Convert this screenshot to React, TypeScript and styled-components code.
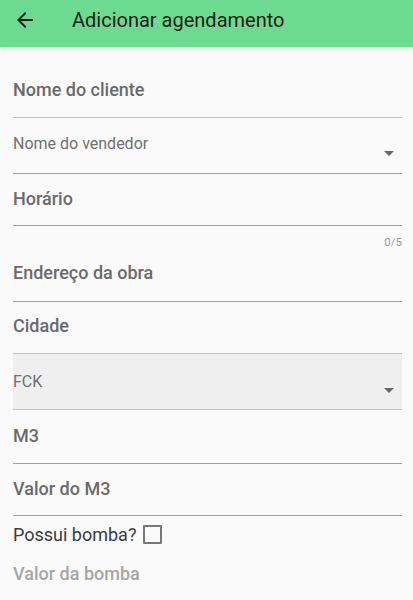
import React from 'react';
import styled, {createGlobalStyle} from 'styled-components';

const GlobalStyle = createGlobalStyle`
  html, body {
    margin: 0;
    padding: 0;
    background: #fafafa;
    font-family: Roboto, "Noto Sans", Arial, sans-serif;
  }
`;

const Screen = styled.div`
  width: 413px;
  height: 600px;
  overflow: hidden;
  background: #fafafa;
`;

const AppBar = styled.header`
  height: 47px;
  display: flex;
  align-items: center;
  padding-left: 13px;
  background: #6ddb8f;
  box-shadow: 0 2px 4px rgba(0, 0, 0, 0.12);
  position: relative;
  z-index: 1;
  box-sizing: border-box;
  padding-bottom: 8px;

  & h1 {
    margin: 0 0 0 35px;
    font-size: 20px;
    font-weight: 400;
    color: #1b1b1b;
  }
`;

const Form = styled.div`
  padding: 0 11px 0 13px;
`;

const Field = styled.div<{top: number; bottom: number; line?: string}>`
  padding-top: ${p => p.top}px;
  padding-bottom: ${p => p.bottom}px;
  border-bottom: 1px solid ${p => p.line || '#a0a0a0'};
  font-size: 18px;
  line-height: 20px;
  font-weight: 500;
  color: #6a6a6a;
`;

const Select = styled.div<{filled?: boolean}>`
  height: 55px;
  display: flex;
  justify-content: space-between;
  border-bottom: 1px solid ${p => (p.filled ? '#c4c4c4' : '#a0a0a0')};
  background: ${p => (p.filled ? '#efefef' : 'transparent')};
  box-sizing: content-box;

  & span {
    padding-top: ${p => (p.filled ? 19 : 17)}px;
    font-size: 16px;
    line-height: 18px;
    color: #707070;
  }
`;

const Caret = styled.i<{drop: number}>`
  align-self: flex-start;
  margin-top: ${p => p.drop}px;
  margin-right: 8px;
  width: 0;
  height: 0;
  border-left: 5px solid transparent;
  border-right: 5px solid transparent;
  border-top: 5px solid #666;
`;

const Helper = styled.div`
  text-align: right;
  font-size: 11.5px;
  line-height: 14px;
  padding-top: 9px;
  height: 14px;
  color: #9a9a9a;
`;

const CheckRow = styled.label`
  display: flex;
  align-items: center;
  gap: 7px;
  padding-top: 8px;
  height: 20px;
  font-size: 18px;
  color: #3a3a3a;
`;

const Box = styled.span`
  width: 15px;
  height: 15px;
  border: 2px solid #777;
  border-radius: 1px;
`;

const Hint = styled.div`
  padding-top: 20px;
  font-size: 18px;
  line-height: 20px;
  font-weight: 500;
  color: #a6a6a6;
`;

export default function App() {
  return (
    <Screen>
      <GlobalStyle/>
      <AppBar>
        <svg width="24" height="24" viewBox="0 0 24 24">
          <path d="M20 11H7.83l5.59-5.59L12 4l-8 8 8 8 1.41-1.41L7.83 13H20v-2z" fill="#1b1b1b"/>
        </svg>
        <h1>Adicionar agendamento</h1>
      </AppBar>
      <Form>
        <Field top={33} bottom={17} line="#c2c2c2">Nome do cliente</Field>
        <Select>
          <span>Nome do vendedor</span>
          <Caret drop={33}/>
        </Select>
        <Field top={15} bottom={16}>Horário</Field>
        <Helper>0/5</Helper>
        <Field top={14} bottom={18}>Endereço da obra</Field>
        <Field top={14} bottom={17} line="#c4c4c4">Cidade</Field>
        <Select filled>
          <span>FCK</span>
          <Caret drop={34}/>
        </Select>
        <Field top={16} bottom={17}>M3</Field>
        <Field top={15} bottom={16}>Valor do M3</Field>
        <CheckRow>Possui bomba? <Box/></CheckRow>
        <Hint>Valor da bomba</Hint>
      </Form>
    </Screen>
  );
}
